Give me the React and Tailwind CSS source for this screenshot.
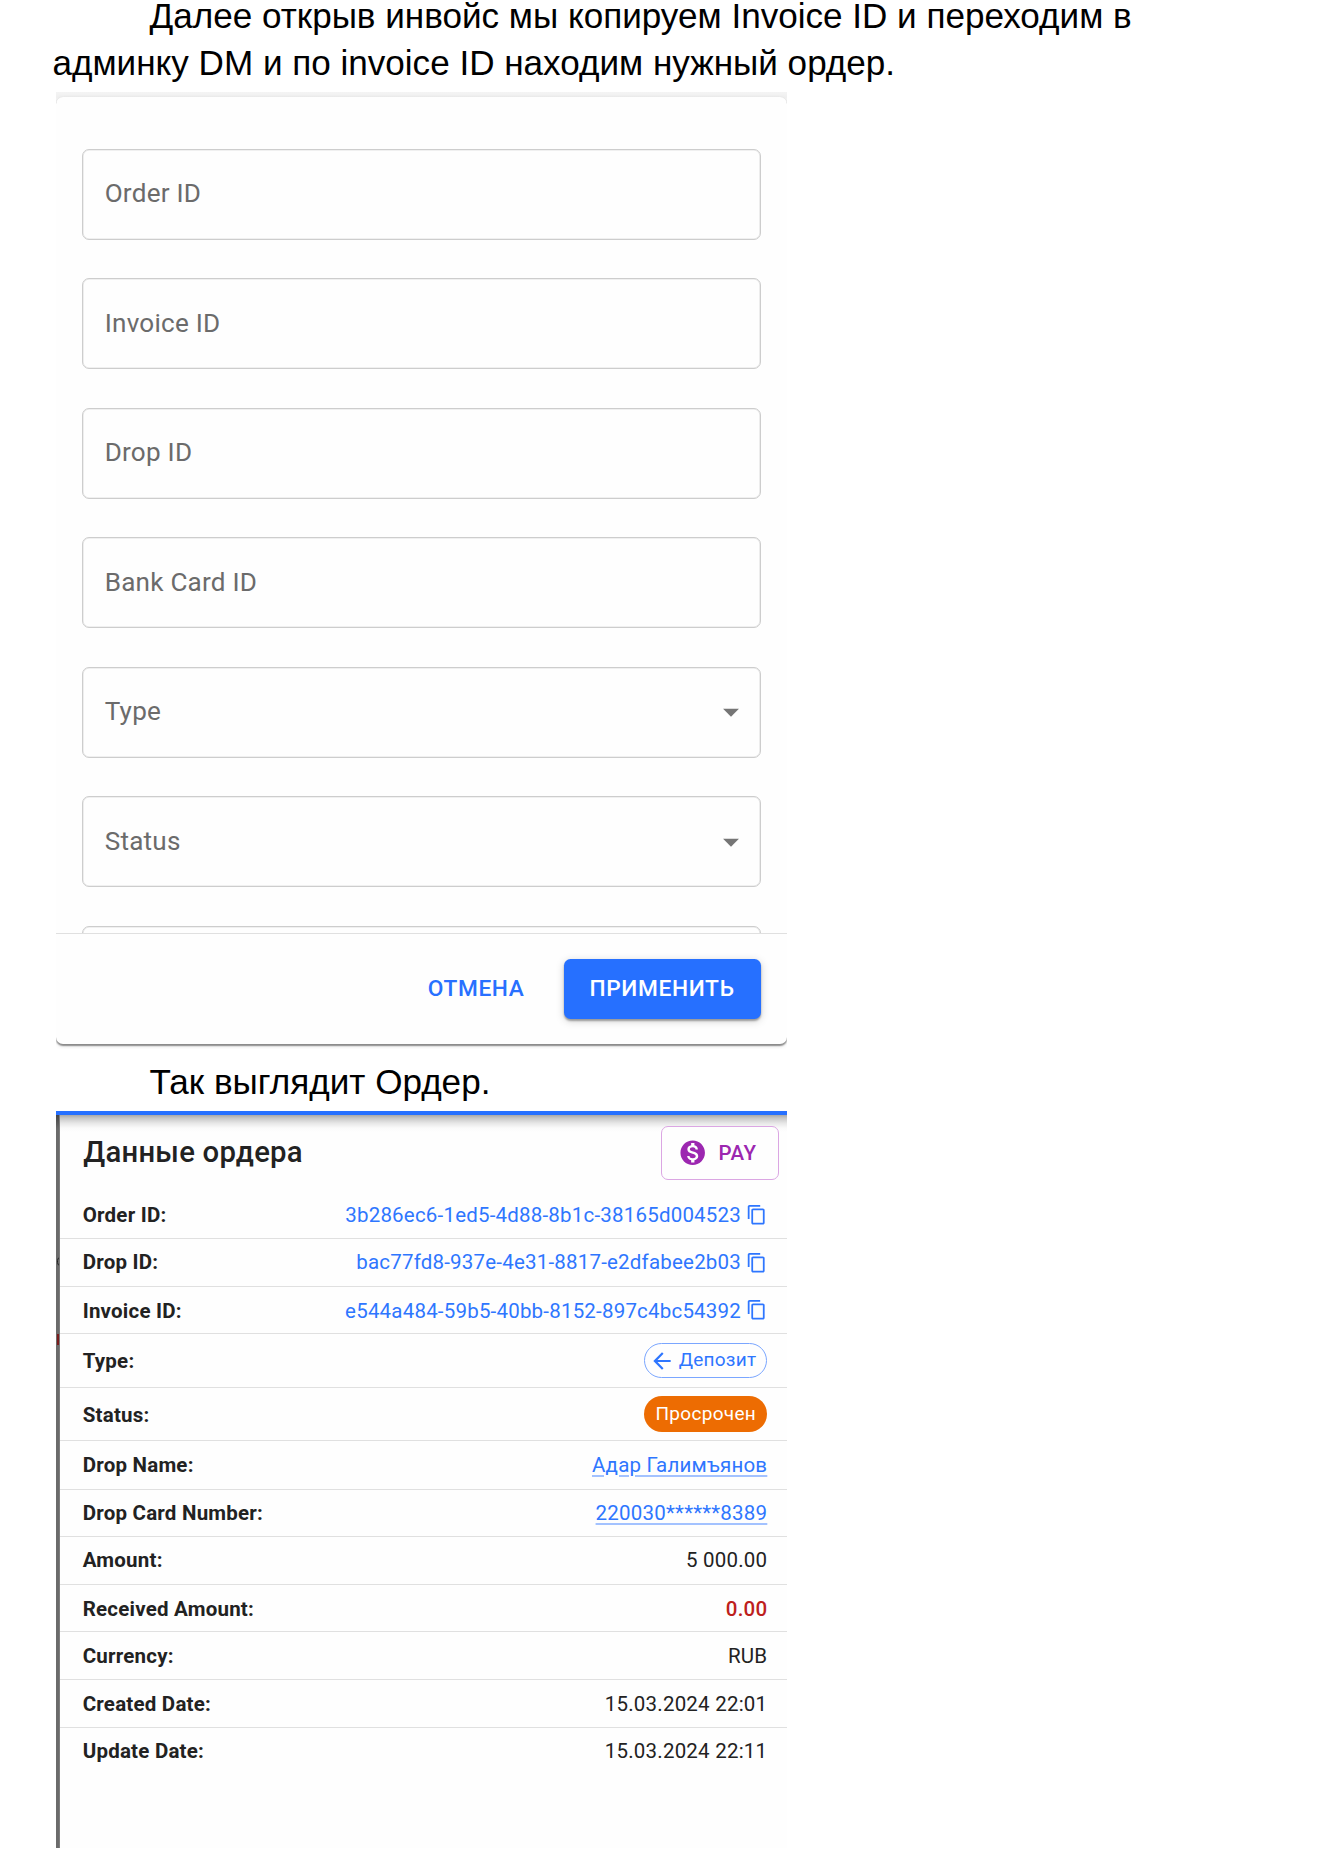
const FIELDS = [
  { label: "Order ID" },
  { label: "Invoice ID" },
  { label: "Drop ID" },
  { label: "Bank Card ID" },
  { label: "Type", select: true },
  { label: "Status", select: true },
];

function Icon({ d, className }) {
  return (
    <svg viewBox="0 0 24 24" fill="currentColor" className={`shrink-0 ${className}`}>
      <path d={d} />
    </svg>
  );
}

const DROP_DOWN = "M7 10l5 5 5-5z";
const ARROW_BACK = "M20 11H7.83l5.59-5.59L12 4l-8 8 8 8 1.41-1.41L7.83 13H20v-2z";
const COPY =
  "M16 1H4c-1.1 0-2 .9-2 2v14h2V3h12V1zm3 4H8c-1.1 0-2 .9-2 2v14c0 1.1.9 2 2 2h11c1.1 0 2-.9 2-2V7c0-1.1-.9-2-2-2zm0 16H8V7h11v14z";
const MONEY =
  "M12 2C6.48 2 2 6.48 2 12s4.48 10 10 10 10-4.48 10-10S17.52 2 12 2zm1.41 16.09V20h-2.67v-1.93c-1.71-.36-3.16-1.46-3.27-3.4h1.96c.1 1.05.82 1.87 2.65 1.87 1.96 0 2.4-.98 2.4-1.59 0-.83-.44-1.61-2.67-2.14-2.48-.6-4.18-1.62-4.18-3.67 0-1.72 1.39-2.84 3.11-3.21V4h2.67v1.95c1.86.45 2.79 1.86 2.85 3.39H14.3c-.05-1.11-.64-1.87-2.22-1.87-1.5 0-2.4.68-2.4 1.64 0 .84.65 1.39 2.67 1.91s4.18 1.39 4.18 3.91c-.02 1.83-1.38 2.83-3.12 3.16z";

function Field({ label, select }) {
  return (
    <div className="flex h-[91px] shrink-0 items-center justify-between rounded-[7px] border border-[#cdcdcd] pr-[10px] pl-[21.7px] shadow-[inset_0_0_0_0.6px_#e2e2e2]">
      <span className="text-[26.1px] tracking-[0.23px] text-[#6b6b6b]">{label}</span>
      {select && <Icon d={DROP_DOWN} className="size-[38px] text-[#757575]" />}
    </div>
  );
}

function FilterDialog() {
  return (
    <section className="ml-[56px] h-[957px] w-[731px] overflow-hidden bg-[linear-gradient(#f4f4f4_0,#f0f0f0_5px,#ffffff_12px)] pt-[5px] font-['Roboto',sans-serif]">
      <div className="flex h-[947px] flex-col rounded-[7px] bg-[#fefefe] shadow-[0_1.5px_1.5px_rgba(0,0,0,0.42),0_2px_5px_rgba(0,0,0,0.1)]">
        <div className="flex h-[836px] shrink-0 flex-col gap-[38.5px] overflow-hidden pt-[51.5px] pr-[26.5px] pl-[26px]">
          {FIELDS.map((f) => (
            <Field key={f.label} {...f} />
          ))}
          <Field label="" />
        </div>
        <div className="flex flex-1 items-start justify-end border-t border-[#e0e0e0] pt-[25px] pr-[26.5px] text-[22.7px] font-medium tracking-[0.65px]">
          <button className="flex h-[60px] items-center px-[13px] text-[#2870ff]">ОТМЕНА</button>
          <button className="ml-[26px] flex h-[60px] w-[197px] items-center justify-center rounded-[6.5px] bg-[#2670ff] text-white shadow-[0_2px_2px_rgba(0,0,0,0.32),0_2px_8px_rgba(0,0,0,0.18)]">
            ПРИМЕНИТЬ
          </button>
        </div>
      </div>
    </section>
  );
}

function Uuid({ children, className = "" }) {
  return (
    <span className="flex items-center gap-[5px] tracking-[0.2px] text-[#2e76ff]">
      <span className={className}>{children}</span>
      <Icon d={COPY} className="size-[21.3px]" />
    </span>
  );
}

function Link({ children }) {
  return (
    <span className="text-[#2e76ff] underline decoration-[#a3c2ff] decoration-2 underline-offset-[3px]">
      {children}
    </span>
  );
}

function Row({ label, height, labelClass = "", children }) {
  return (
    <div className={`flex items-center justify-between border-b border-[#e0e0e0] pr-[19.7px] pl-[22.7px] last:border-transparent ${height}`}>
      <span className={`font-bold ${labelClass}`}>{label}</span>
      {children}
    </div>
  );
}

function OrderPanel() {
  return (
    <section className="ml-[56px] flex h-[737px] w-[731px] flex-col font-['Roboto',sans-serif]">
      <div className="h-[4px] shrink-0 bg-[#2670ff]" />
      <div className="flex flex-1">
        <div className="relative w-[4px] overflow-hidden border-r border-[#7d7d7d] bg-[linear-gradient(#454545_0,#6b6b6b_14px)]">
          <div className="absolute top-[142px] left-[1px] h-[9px] w-[7px] rounded-full border border-[#222]" />
          <div className="absolute top-[219px] left-[1px] h-[11px] w-[2px] bg-[#7a1c1c]" />
        </div>
        <div className="flex-1 bg-[linear-gradient(#a8a8a8_0,#c6c6c6_3px,#e6e6e6_8px,#fafafa_13px,#fefefe_17px)] text-[20.5px] tracking-[0.22px] text-[#222]">
          <div className="flex h-[76px] items-start justify-between pt-[11px] pr-[8px] pl-[23.3px]">
            <h1 className="mt-[8px] text-[29.3px] leading-[36px] font-medium tracking-[0.22px]">Данные ордера</h1>
            <button className="flex h-[54px] w-[118px] items-center gap-[11.5px] rounded-[7px] border border-[#dba6e3] bg-[#fefefe] pl-[15.5px] font-medium tracking-[0.5px] text-[#9c27b0]">
              <Icon d={MONEY} className="size-[29.4px]" />
              PAY
            </button>
          </div>
          <Row label="Order ID:" height="h-[48px]" labelClass="mt-[2px]">
            <Uuid className="mt-[2px]">3b286ec6-1ed5-4d88-8b1c-38165d004523</Uuid>
          </Row>
          <Row label="Drop ID:" height="h-[48px]">
            <Uuid>bac77fd8-937e-4e31-8817-e2dfabee2b03</Uuid>
          </Row>
          <Row label="Invoice ID:" height="h-[47px]" labelClass="mt-[2px]">
            <Uuid className="mt-[2px]">e544a484-59b5-40bb-8152-897c4bc54392</Uuid>
          </Row>
          <Row label="Type:" height="h-[54px]" labelClass="mt-[2px]">
            <span className="flex h-[35px] w-[123px] items-center gap-[4px] rounded-full border border-[#7aa6ff] pl-[3.5px] text-[19px] text-[#2e76ff]">
              <Icon d={ARROW_BACK} className="size-[26px]" />
              Депозит
            </span>
          </Row>
          <Row label="Status:" height="h-[53px]" labelClass="mt-[2px]">
            <span className="flex h-[36px] w-[123px] items-center justify-center rounded-full bg-[#ed6c02] text-[19px] tracking-[0.3px] text-white">
              Просрочен
            </span>
          </Row>
          <Row label="Drop Name:" height="h-[49px]">
            <Link>Адар Галимъянов</Link>
          </Row>
          <Row label="Drop Card Number:" height="h-[47px]">
            <Link>220030******8389</Link>
          </Row>
          <Row label="Amount:" height="h-[48px]">
            <span>5 000.00</span>
          </Row>
          <Row label="Received Amount:" height="h-[47px]" labelClass="mt-[2px]">
            <span className="mt-[2px] font-medium text-[#bd201b]">0.00</span>
          </Row>
          <Row label="Currency:" height="h-[48px]" labelClass="mt-[2px]">
            <span className="mt-[2px]">RUB</span>
          </Row>
          <Row label="Created Date:" height="h-[48px]" labelClass="mt-[2px]">
            <span className="mt-[2px]">15.03.2024 22:01</span>
          </Row>
          <Row label="Update Date:" height="h-[48px]">
            <span>15.03.2024 22:11</span>
          </Row>
        </div>
      </div>
    </section>
  );
}

export default function App() {
  return (
    <main className="flex h-[1871px] w-[1323px] flex-col bg-white">
      <div className="h-[92px] shrink-0 pl-[52.5px] font-['Liberation_Sans',sans-serif] text-[35.1px] whitespace-nowrap text-black">
        <p className="pl-[97px] leading-[32px]">Далее открыв инвойс мы копируем Invoice ID и переходим в</p>
        <p className="mt-[8px] leading-[46.6px]">админку DM и по invoice ID находим нужный ордер.</p>
      </div>
      <FilterDialog />
      <p className="h-[62px] pt-[9.5px] pl-[149.5px] font-['Liberation_Sans',sans-serif] text-[35.1px] leading-[46.6px] text-black">
        Так выглядит Ордер.
      </p>
      <OrderPanel />
    </main>
  );
}
